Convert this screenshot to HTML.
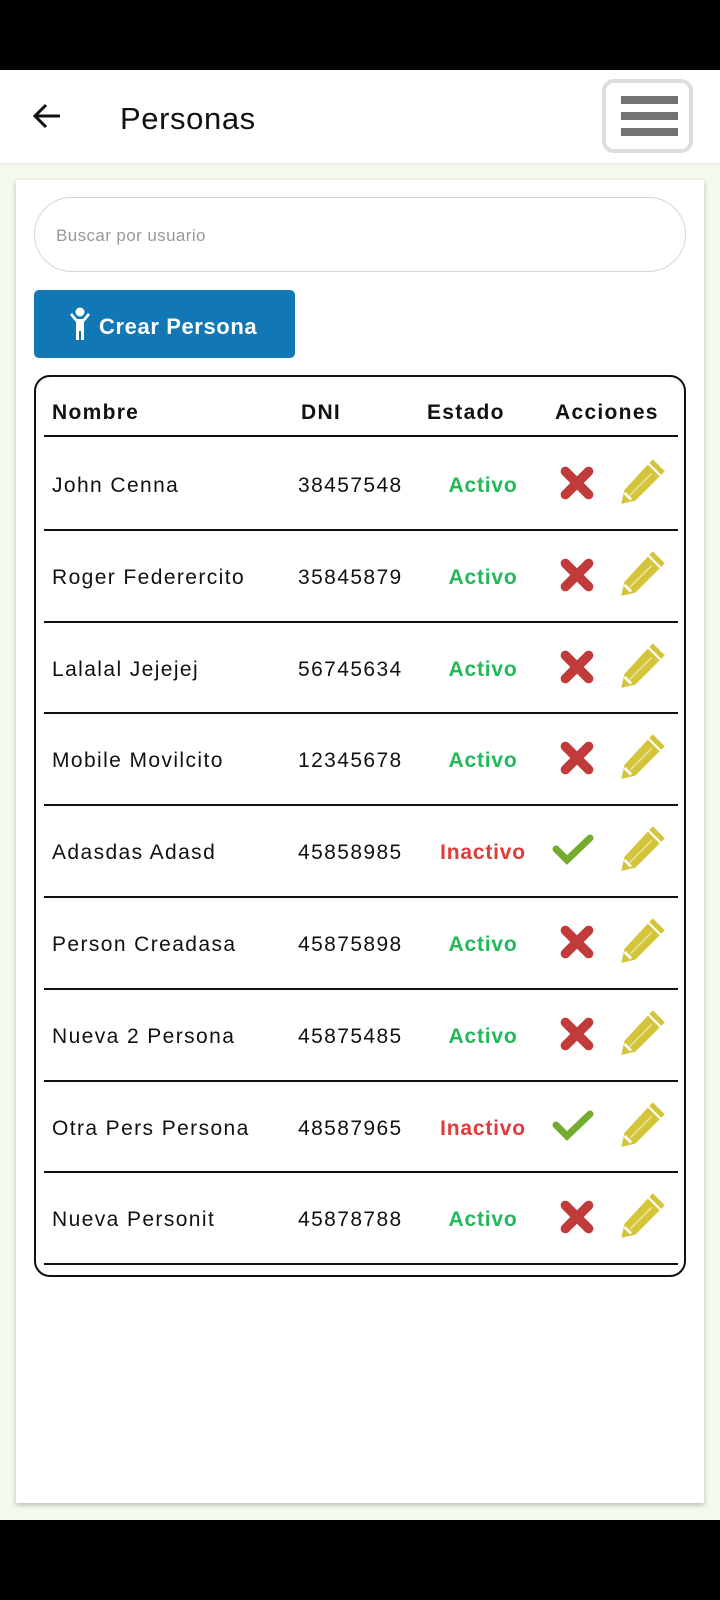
<!DOCTYPE html>
<html><head><meta charset="utf-8"><style>
*{margin:0;padding:0;box-sizing:border-box}
body{width:720px;height:1600px;background:#000;position:relative;font-family:"Liberation Sans",sans-serif;overflow:hidden}
.page{position:absolute;top:70px;left:0;width:720px;height:1450px;background:#f4f9ee}
.hdr{position:absolute;top:70px;left:0;width:720px;height:93px;background:#fff;box-shadow:0 1px 3px rgba(0,0,0,.08)}
.title{position:absolute;left:120px;top:31px;font-size:31px;color:#111;letter-spacing:.6px}
.menu{position:absolute;left:602px;top:9px;width:91px;height:74px;border:4px solid #ddd;border-radius:12px;background:#fff}
.menu i{position:absolute;left:15px;width:57px;height:8px;background:#737373}
.card{position:absolute;left:16px;top:180px;width:688px;height:1323px;background:#fff;box-shadow:0 2px 5px rgba(0,0,0,.25)}
.search{position:absolute;left:18px;top:17px;width:652px;height:75px;border:1.5px solid #d6d6d6;border-radius:38px;font-size:17px;color:#999;padding:28px 0 0 21px;letter-spacing:.4px}
.btn{position:absolute;left:18px;top:110px;width:261px;height:68px;background:#1278b5;border-radius:5px;color:#fff;font-weight:bold;font-size:22px;letter-spacing:.6px;padding:24px 0 0 65px}
.tbl{position:absolute;left:18px;top:195px;width:652px;height:902px;border:2px solid #111;border-radius:16px}
.h{position:absolute;top:24px;font-weight:bold;font-size:21px;color:#111;letter-spacing:1.3px}
.line{position:absolute;left:8px;width:634px;height:2px;background:#111}
.c{position:absolute;font-size:21px;color:#111;letter-spacing:1.4px}
.st{position:absolute;font-weight:bold;font-size:21px;width:120px;text-align:center;letter-spacing:.8px}
</style></head><body>
<div class="page"></div>
<div class="hdr">
<svg style="position:absolute;left:32px;top:32px" width="30" height="28" viewBox="0 0 30 28"><path d="M28 14H4M14 3L3 14l11 11" fill="none" stroke="#111" stroke-width="3"/></svg>
<div class="title">Personas</div>
<div class="menu"><i style="top:13px"></i><i style="top:29px"></i><i style="top:45px"></i></div>
</div>
<div class="card">
<div class="search">Buscar por usuario</div>
<div class="btn"><svg style="position:absolute;left:34px;top:17px" width="24" height="34" viewBox="0 0 24 34"><circle cx="12" cy="5" r="4.5" fill="#fff"/><path d="M2 8l6 7v18h3V24h2v9h3V15l6-7-2-2-5 6H9L4 6z" fill="#fff"/></svg>Crear Persona</div>
<div class="tbl">
<div class="h" style="left:16px">Nombre</div>
<div class="h" style="left:265px">DNI</div>
<div class="h" style="left:391px">Estado</div>
<div class="h" style="left:519px">Acciones</div>
ROWS
</div>
</div>
<script>
var d=[["John Cenna","38457548",1],["Roger Federercito","35845879",1],["Lalalal Jejejej","56745634",1],["Mobile Movilcito","12345678",1],["Adasdas Adasd","45858985",0],["Person Creadasa","45875898",1],["Nueva 2 Persona","45875485",1],["Otra Pers Persona","48587965",0],["Nueva Personit","45878788",1]];
var h='<div class="line" style="top:58px"></div>';
var pen='<svg width="50" height="50" viewBox="0 0 46 46"><path d="M32 3l11 11-27 27-13 3 3-13z" fill="#d4c43a"/><path d="M28 7l11 11" stroke="#fff" stroke-width="2"/><path d="M11 36l20-20" stroke="#fff" stroke-width="1.2" opacity=".6"/><path d="M6 34l6 6" stroke="#fff" stroke-width="2.5"/></svg>';
var x='<svg width="38" height="38" viewBox="0 0 36 36"><path d="M7 7l22 22M29 7L7 29" stroke="#c23b3b" stroke-width="9" stroke-linecap="round"/></svg>';
var ok='<svg width="46" height="36" viewBox="0 0 44 36"><path d="M5 18l11 11L39 7" fill="none" stroke="#74ac2e" stroke-width="7" stroke-linecap="round"/></svg>';
d.forEach(function(r,i){var y=60+i*91.8;var ty=y+37;
h+='<div class="c" style="left:16px;top:'+ty+'px">'+r[0]+'</div><div class="c" style="left:262px;top:'+ty+'px">'+r[1]+'</div>';
h+='<div class="st" style="left:387px;top:'+ty+'px;color:'+(r[2]?'#22b85a':'#e03a3a')+'">'+(r[2]?'Activo':'Inactivo')+'</div>';
h+='<div style="position:absolute;left:'+(r[2]?522:514)+'px;top:'+(y+27)+'px">'+(r[2]?x:ok)+'</div>';
h+='<div style="position:absolute;left:582px;top:'+(y+19)+'px">'+pen+'</div>';
h+='<div class="line" style="top:'+(y+91.8)+'px"></div>';});
document.querySelector('.tbl').innerHTML=document.querySelector('.tbl').innerHTML.replace('ROWS',h);
</script>
</body></html>
